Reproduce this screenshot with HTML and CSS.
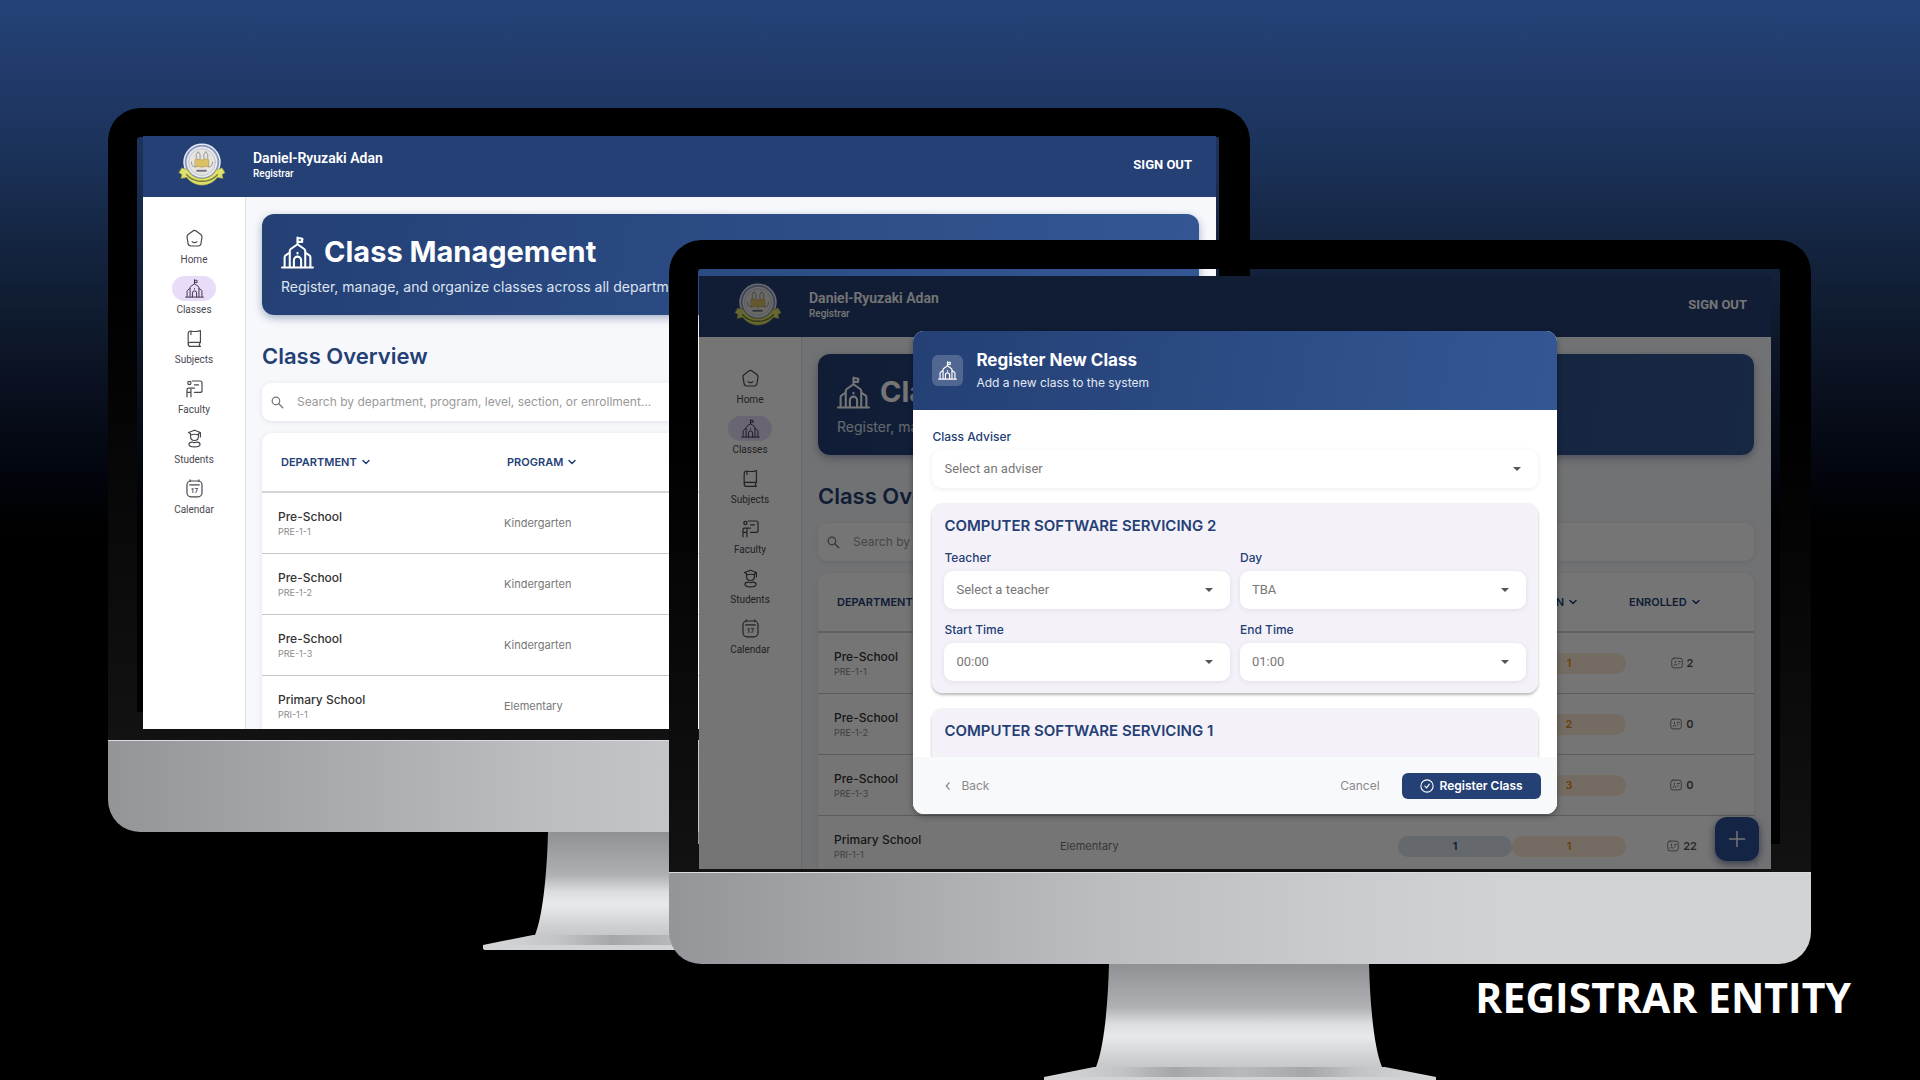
FILE: index.html
```html
<!DOCTYPE html>
<html lang="en">
<head>
<meta charset="utf-8">
<meta name="viewport" content="width=device-width, initial-scale=1">
<title>Registrar Entity</title>
<link rel="stylesheet" href="styles.css">
</head>
<body>
<svg class="sprite" aria-hidden="true">
  <defs>
    <linearGradient id="neck" x1="0" y1="0" x2="0" y2="1">
      <stop offset="0" stop-color="#8f9194"/><stop offset=".4" stop-color="#aeb0b3"/><stop offset=".56" stop-color="#dcdddf"/><stop offset=".68" stop-color="#e8e9ea"/><stop offset=".88" stop-color="#cfd0d2"/><stop offset="1" stop-color="#c3c4c7"/>
    </linearGradient>
    <linearGradient id="foot" x1="0" y1="0" x2="1" y2="0">
      <stop offset="0" stop-color="#d8d9da"/><stop offset=".2" stop-color="#c2c3c6"/><stop offset=".33" stop-color="#a6a7ab"/><stop offset=".5" stop-color="#b9babd"/><stop offset=".67" stop-color="#a6a7ab"/><stop offset=".8" stop-color="#c2c3c6"/><stop offset="1" stop-color="#d8d9da"/>
    </linearGradient>
    <path id="ribbon" d="M5 27l6 2c4 7 9 9 15 9s11-2 15-9l6-2 3 5-3 2 1 4-6-1c-4 5-10 8-16 8s-12-3-16-8l-6 1 1-4-3-2z"/>
  </defs>
  <symbol id="i-school" viewBox="0 0 32 32"><path d="M1 30.500h30M3.500 30V20.500c0-1 .5-1.500 1.300-2L8.500 16M28.500 30V20.500c0-1-.5-1.500-1.300-2L23.500 16M8.500 30V14.500c0-.8.3-1.400 1-1.900L16 8l6.500 4.600c.7.5 1 1.100 1 1.900V30M16 8V1.500M16 2l4 .4c1 .1 1 .8.600 1.400-.5.700-.4 1.200 0 1.900H16M12.500 30v-6.500a3.500 3.500 0 0 1 7 0V30M16 16.200v.8"/></symbol>
  <symbol id="i-home" viewBox="0 0 24 24"><path d="M10 2.500c1.200-.9 2.800-.9 4 0l6 4.500c1.200.9 1.700 2.200 1.400 3.600l-1.300 8c-.3 1.700-1.700 2.900-3.400 2.900H7.300c-1.700 0-3.100-1.200-3.400-2.900l-1.300-8C2.300 9.200 2.800 7.900 4 7zM9 16c1.600 1.400 4.400 1.400 6 0"/></symbol>
  <symbol id="i-book" viewBox="0 0 24 24"><path d="M4 18.500V6c0-2 1.500-3.500 3.500-3.500 3.500 1 8 .8 12-.5v15H6.500M4 18.500C4 20.500 5 22 7 22h12.500M4 18.500C4 17.500 5 17 6.500 17M19 17c-1 1.500-1 3.500 0 5M7.500 2.500V7"/></symbol>
  <symbol id="i-faculty" viewBox="0 0 24 24"><path d="M9 2.500h10c1.700 0 2.500.8 2.500 2.500v9.500c0 1.700-.8 2.500-2.500 2.500h-7M12 7.500h5M2.500 22.500v-9c0-1.200.8-2 2-2H12M7.500 22.500V13M2.500 17h5"/><circle cx="5.500" cy="5" r="2"/></symbol>
  <symbol id="i-student" viewBox="0 0 24 24"><path d="M12 1.500 4.500 4.500 7 6v3.500c0 3.500 2 5 5 5s5-1.500 5-5V6l2.500-1.500zM7 7.500c3-1 7-1 10 0M19.500 5v5M5 19.500c0-2 2-3 4-3 2 1 4 1 6 0 2 0 4 1 4 3S16 22.500 12 22.500s-7-1-7-3z"/></symbol>
  <symbol id="i-search" viewBox="0 0 24 24"><circle cx="9.500" cy="9.500" r="6"/><path d="m14 14 6.500 6.500"/></symbol>
  <symbol id="i-down" viewBox="0 0 12 12"><path d="m3 4.500 3 3 3-3"/></symbol>
  <symbol id="i-card" viewBox="0 0 16 16"><rect x="1" y="1.500" width="14" height="13" rx="3"/><path d="M4 11c0-2 4-2 4 0M6 5.500v2M10 6h2.500M10 9h1"/></symbol>
  <symbol id="i-plus" viewBox="0 0 24 24"><path d="M12 2v20M2 12h20"/></symbol>
  <symbol id="i-back" viewBox="0 0 12 12"><path d="M7.500 2 4 6l3.500 4"/></symbol>
  <symbol id="i-check" viewBox="0 0 16 16"><circle cx="8" cy="8" r="7"/><path d="m5.500 8 2 2.200 3.200-4.400"/></symbol>
  <symbol id="i-seal" viewBox="0 0 52 48">
    <circle cx="26" cy="21" r="19.500" fill="#e9ebf3"/>
    <circle cx="26" cy="21" r="17" fill="none" stroke="#8b98c0" stroke-width="2" stroke-dasharray="1.500 1.200"/>
    <circle cx="26" cy="21" r="14" fill="#e6e4dc" stroke="#a5adc2" stroke-width=".6"/>
    <path d="M19 18.500c3-1 5-1 7 .5 2-1.500 4-1.500 7-.5V26c-3-.8-5-.5-7 .5-2-1-4-1.300-7-.5z" fill="#dcc065" stroke="#a58c45" stroke-width=".6"/>
    <path d="M20 17v-4l2-3 2 3v4M28 17v-4l2-3 2 3v4M15 21c0 3 1 5 4 5M37 21c0 3-1 5-4 5" fill="none" stroke="#7b828c" stroke-width=".8"/>
    <path d="M21 30h10" stroke="#6d748a" stroke-width="2" stroke-dasharray="1.500 1"/>
    <use href="#ribbon" fill="#dfe06c" stroke="#8d9440" stroke-width=".6"/>
    <path d="M10 34c4 5 10 7 16 7s12-2 16-7" fill="none" stroke="#6f7a35" stroke-width="1.500" stroke-dasharray="2 1"/>
  </symbol>
  <symbol id="i-stand" viewBox="0 0 392 119">
    <path d="M65 0h260c1 40 5 84 13 103l-143 4-143-4C60 84 64 40 65 0z" fill="url(#neck)"/>
    <path d="M50 103h291l51 10v3H0v-3z" fill="url(#foot)"/>
    <path d="M0 113h392v3q0 2-3 2H3q-3 0-3-2z" fill="#d2d3d5"/>
  </symbol>
</svg>

<main class="stage">
  <section class="monitor monitor-back">
    <div class="display">
      <div class="screen">
        <header class="topbar">
          <svg class="seal"><use href="#i-seal"/></svg>
          <div class="user"><strong>Daniel-Ryuzaki Adan</strong><span>Registrar</span></div>
          <button class="signout" type="button">SIGN OUT</button>
        </header>
        <div class="layout">
          <nav class="sidebar">
            <a href="#"><span class="nav-icon"><svg><use href="#i-home"/></svg></span>Home</a>
            <a href="#" class="active"><span class="nav-icon"><svg><use href="#i-school"/></svg></span>Classes</a>
            <a href="#"><span class="nav-icon"><svg><use href="#i-book"/></svg></span>Subjects</a>
            <a href="#"><span class="nav-icon"><svg><use href="#i-faculty"/></svg></span>Faculty</a>
            <a href="#"><span class="nav-icon"><svg><use href="#i-student"/></svg></span>Students</a>
            <a href="#"><span class="nav-icon"><svg viewBox="0 0 24 24"><rect x="2.500" y="2.500" width="19" height="20" rx="5"/><path d="M6 7.500h12M6.500 1v2M17.500 1v2"/><text x="12" y="17.500" text-anchor="middle">17</text></svg></span>Calendar</a>
          </nav>
          <div class="content">
            <div class="banner">
              <h1><svg><use href="#i-school"/></svg>Class Management</h1>
              <p>Register, manage, and organize classes across all departments</p>
            </div>
            <h2>Class Overview</h2>
            <div class="search"><svg><use href="#i-search"/></svg><input type="text" aria-label="Search classes" placeholder="Search by department, program, level, section, or enrollment..."></div>
            <table class="classes">
              <colgroup><col class="c-dept"><col class="c-prog"><col class="c-num"><col class="c-num"><col class="c-enr"></colgroup>
              <thead><tr>
                <th><button type="button">DEPARTMENT<svg><use href="#i-down"/></svg></button></th>
                <th><button type="button">PROGRAM<svg><use href="#i-down"/></svg></button></th>
                <th><button type="button">LEVEL<svg><use href="#i-down"/></svg></button></th>
                <th><button type="button">SECTION<svg><use href="#i-down"/></svg></button></th>
                <th><button type="button">ENROLLED<svg><use href="#i-down"/></svg></button></th>
              </tr></thead>
              <tbody>
                <tr><td><b>Pre-School</b><small>PRE-1-1</small></td><td>Kindergarten</td><td><span class="pill level">1</span></td><td><span class="pill section">1</span></td><td><span class="count"><svg><use href="#i-card"/></svg>2</span></td></tr>
                <tr><td><b>Pre-School</b><small>PRE-1-2</small></td><td>Kindergarten</td><td><span class="pill level">1</span></td><td><span class="pill section">2</span></td><td><span class="count"><svg><use href="#i-card"/></svg>0</span></td></tr>
                <tr><td><b>Pre-School</b><small>PRE-1-3</small></td><td>Kindergarten</td><td><span class="pill level">1</span></td><td><span class="pill section">3</span></td><td><span class="count"><svg><use href="#i-card"/></svg>0</span></td></tr>
                <tr><td><b>Primary School</b><small>PRI-1-1</small></td><td>Elementary</td><td><span class="pill level">1</span></td><td><span class="pill section">1</span></td><td><span class="count"><svg><use href="#i-card"/></svg>22</span></td></tr>
              </tbody>
            </table>
          </div>
        </div>
      </div>
    </div>
    <div class="chin"></div>
    <svg class="stand"><use href="#i-stand"/></svg>
  </section>

  <section class="monitor monitor-front">
    <div class="display">
      <div class="screen">
        <header class="topbar">
          <svg class="seal"><use href="#i-seal"/></svg>
          <div class="user"><strong>Daniel-Ryuzaki Adan</strong><span>Registrar</span></div>
          <button class="signout" type="button">SIGN OUT</button>
        </header>
        <div class="layout">
          <nav class="sidebar">
            <a href="#"><span class="nav-icon"><svg><use href="#i-home"/></svg></span>Home</a>
            <a href="#" class="active"><span class="nav-icon"><svg><use href="#i-school"/></svg></span>Classes</a>
            <a href="#"><span class="nav-icon"><svg><use href="#i-book"/></svg></span>Subjects</a>
            <a href="#"><span class="nav-icon"><svg><use href="#i-faculty"/></svg></span>Faculty</a>
            <a href="#"><span class="nav-icon"><svg><use href="#i-student"/></svg></span>Students</a>
            <a href="#"><span class="nav-icon"><svg viewBox="0 0 24 24"><rect x="2.500" y="2.500" width="19" height="20" rx="5"/><path d="M6 7.500h12M6.500 1v2M17.500 1v2"/><text x="12" y="17.500" text-anchor="middle">17</text></svg></span>Calendar</a>
          </nav>
          <div class="content">
            <div class="banner">
              <h1><svg><use href="#i-school"/></svg>Class Management</h1>
              <p>Register, manage, and organize classes across all departments</p>
            </div>
            <h2>Class Overview</h2>
            <div class="search"><svg><use href="#i-search"/></svg><input type="text" aria-label="Search classes" placeholder="Search by department, program, level, section, or enrollment..."></div>
            <table class="classes">
              <colgroup><col class="c-dept"><col class="c-prog"><col class="c-num"><col class="c-num"><col class="c-enr"></colgroup>
              <thead><tr>
                <th><button type="button">DEPARTMENT<svg><use href="#i-down"/></svg></button></th>
                <th><button type="button">PROGRAM<svg><use href="#i-down"/></svg></button></th>
                <th><button type="button">LEVEL<svg><use href="#i-down"/></svg></button></th>
                <th><button type="button">SECTION<svg><use href="#i-down"/></svg></button></th>
                <th><button type="button">ENROLLED<svg><use href="#i-down"/></svg></button></th>
              </tr></thead>
              <tbody>
                <tr><td><b>Pre-School</b><small>PRE-1-1</small></td><td>Kindergarten</td><td><span class="pill level">1</span></td><td><span class="pill section">1</span></td><td><span class="count"><svg><use href="#i-card"/></svg>2</span></td></tr>
                <tr><td><b>Pre-School</b><small>PRE-1-2</small></td><td>Kindergarten</td><td><span class="pill level">1</span></td><td><span class="pill section">2</span></td><td><span class="count"><svg><use href="#i-card"/></svg>0</span></td></tr>
                <tr><td><b>Pre-School</b><small>PRE-1-3</small></td><td>Kindergarten</td><td><span class="pill level">1</span></td><td><span class="pill section">3</span></td><td><span class="count"><svg><use href="#i-card"/></svg>0</span></td></tr>
                <tr><td><b>Primary School</b><small>PRI-1-1</small></td><td>Elementary</td><td><span class="pill level">1</span></td><td><span class="pill section">1</span></td><td><span class="count"><svg><use href="#i-card"/></svg>22</span></td></tr>
              </tbody>
            </table>
          </div>
        </div>
        <button class="fab" type="button" aria-label="Add class"><svg><use href="#i-plus"/></svg></button>
        <div class="scrim">
          <form class="modal" role="dialog" aria-labelledby="modal-title">
            <header class="modal-head">
              <span class="modal-icon"><svg><use href="#i-school"/></svg></span>
              <div><h2 id="modal-title">Register New Class</h2><p>Add a new class to the system</p></div>
            </header>
            <div class="modal-body">
              <div class="field">
                <label for="adviser">Class Adviser</label>
                <div class="select"><select id="adviser"><option>Select an adviser</option></select></div>
              </div>
              <fieldset class="subject">
                <h3>COMPUTER SOFTWARE SERVICING 2</h3>
                <div class="fields">
                  <div class="field"><label for="teacher">Teacher</label><div class="select"><select id="teacher"><option>Select a teacher</option></select></div></div>
                  <div class="field"><label for="day">Day</label><div class="select"><select id="day"><option>TBA</option></select></div></div>
                  <div class="field"><label for="start">Start Time</label><div class="select"><select id="start"><option>00:00</option></select></div></div>
                  <div class="field"><label for="end">End Time</label><div class="select"><select id="end"><option>01:00</option></select></div></div>
                </div>
              </fieldset>
              <fieldset class="subject">
                <h3>COMPUTER SOFTWARE SERVICING 1</h3>
              </fieldset>
            </div>
            <footer class="modal-foot">
              <button class="plain back" type="button"><svg><use href="#i-back"/></svg>Back</button>
              <button class="plain" type="button">Cancel</button>
              <button class="primary" type="submit"><svg><use href="#i-check"/></svg>Register Class</button>
            </footer>
          </form>
        </div>
      </div>
    </div>
    <div class="chin"></div>
    <svg class="stand"><use href="#i-stand"/></svg>
  </section>
  <p class="caption">REGISTRAR ENTITY</p>
</main>
</body>
</html>
```

FILE: styles.css
```css
* { box-sizing: border-box; margin: 0; padding: 0; }

:root {
  --navy: #244075;
  --blue: #345794;
  --ui: Inter, "Noto Sans", sans-serif;
  --system: Roboto, "Noto Sans", sans-serif;
}

body { background: #000; font-family: var(--ui); color: #333; }
button, input, select { font: inherit; color: inherit; border: 0; background: none; }
svg { display: block; fill: none; stroke: currentColor; stroke-width: 2; stroke-linecap: round; stroke-linejoin: round; }
.sprite { position: absolute; width: 0; height: 0; }

/* Backdrop and the two overlapping monitors */
.stage {
  display: grid;
  grid-template-columns: 108fr 561fr 581fr 561fr 109fr;
  align-items: start;
  height: 100vh;
  padding-top: 108px;
  overflow: hidden;
  background: linear-gradient(#254379, #1b325a 14%, #14243f 23%, #0e1a2d 30%, #0a101f 36%, #02050d 44%, #000 49%);
}
.monitor { display: flex; flex-direction: column; grid-row: 1; min-width: 0; }
.monitor-back { grid-column: 2 / 4; }
.monitor-front { grid-column: 3 / 5; margin-top: 132px; }

.display { display: grid; height: 632px; }
.display::before {
  content: "";
  grid-area: 1 / 1;
  padding: 29px 31px 28px 29px;
  border-radius: 32px 32px 0 0;
  background: linear-gradient(#000 30%, #121212);
  mask: linear-gradient(#000 0 0) content-box exclude, linear-gradient(#000 0 0);
}
.screen {
  grid-area: 1 / 1;
  position: relative;
  display: flex;
  flex-direction: column;
  min-width: 0;
  overflow: hidden;
  background: #f7f8fb;
}
.monitor-back .screen { margin: 28px 34px 11px 35px; }
.monitor-front .screen { margin: 36px 40px 3px 30px; }

.chin {
  height: 92px;
  border-top: 1px solid #dcddde;
  border-radius: 0 0 32px 32px;
  background: linear-gradient(90deg, #939598, #a3a5a8 15%, #bcbdc1 38%, #cbccd0 60%, #d1d3d4 75%);
}
.stand { align-self: center; width: 392px; height: 119px; stroke: none; }

.caption {
  grid-column: 1 / -1;
  grid-row: 1;
  justify-self: end;
  margin-top: 861px;
  margin-right: 69px;
  font: 700 41px/56px "Open Sans", sans-serif;
  color: #fff;
}

/* Application shell */
.topbar {
  display: flex;
  align-items: center;
  flex: none;
  height: 61px;
  padding: 0 24px 0 34px;
  background: var(--navy);
  color: #fff;
  font-family: var(--system);
}
.seal { width: 50px; height: 46px; margin: -4px 26px 0 0; stroke: none; }
.user { display: flex; flex-direction: column; margin-top: -4px; }
.user strong { font-size: 14px; line-height: 17px; font-weight: 600; }
.user span { font-size: 10px; line-height: 13px; font-weight: 500; }
.signout { margin-left: auto; margin-top: -5px; font-size: 13px; font-weight: 700; }

.layout { display: flex; flex: 1; min-height: 0; }
.sidebar {
  display: flex;
  flex-direction: column;
  align-items: center;
  gap: 8px;
  flex: none;
  width: 103px;
  padding-top: 29px;
  border-right: 1px solid #dfe1e6;
  background: #fff;
}
.sidebar a {
  display: flex;
  flex-direction: column;
  align-items: center;
  gap: 3px;
  height: 42px;
  font: 400 10px/12px var(--system);
  color: #4a4650;
  text-decoration: none;
}
.nav-icon { display: grid; place-items: center; width: 44px; height: 25px; border-radius: 13px; }
.nav-icon svg { width: 19px; height: 19px; stroke-width: 1.5; }
.nav-icon text { fill: currentColor; stroke: none; font: 700 8px var(--system); }
.active .nav-icon { background: #e8dcf8; color: #302844; }

.content { flex: 1; min-width: 0; padding: 17px 17px 0 16px; }
.banner {
  height: 101px;
  padding: 20px 19px;
  border-radius: 12px;
  background: linear-gradient(100deg, var(--navy), var(--blue));
  box-shadow: 0 3px 8px rgb(36 64 117 / 40%);
  color: #fff;
}
.banner h1 { display: flex; align-items: center; gap: 10px; font-size: 29px; line-height: 36px; font-weight: 700; }
.banner h1 svg { width: 33px; height: 33px; }
.banner p { margin-top: 7px; font-size: 14px; line-height: 20px; color: #dde4f0; }
.content > h2 { margin: 27px 0 13px; font-size: 22px; line-height: 28px; font-weight: 600; color: var(--navy); }

.search {
  display: flex;
  align-items: center;
  gap: 12px;
  height: 38px;
  padding: 0 8px;
  border-radius: 9px;
  background: #fff;
  box-shadow: 0 1px 5px rgb(36 64 117 / 12%);
}
.search svg { width: 15px; height: 15px; color: #777; }
.search input { flex: 1; font-size: 12px; line-height: 18px; }
.search input::placeholder { color: #999; opacity: 1; }

.classes {
  width: 100%;
  margin-top: 12px;
  table-layout: fixed;
  border-collapse: separate;
  border-spacing: 0;
  border-radius: 10px;
  background: #fff;
  box-shadow: 0 1px 5px rgb(36 64 117 / 12%);
}
.c-dept { width: 242px; }
.c-num { width: 114px; }
.c-enr { width: 128px; }
.classes th { height: 60px; border-bottom: 2px solid #d4d4d6; text-align: left; }
.classes th button { display: flex; align-items: center; gap: 3px; padding-left: 3px; font-size: 11px; font-weight: 600; color: var(--navy); }
.classes th svg { width: 12px; height: 12px; stroke-width: 1.5; }
.classes th:first-child button { padding-left: 19px; }
.classes td { height: 61px; border-bottom: 1px solid #c8c8ca; font-size: 11px; line-height: 14px; color: #777; }
.classes td:first-child { padding-left: 16px; }
.classes td b { display: block; font-size: 12px; line-height: 16px; font-weight: 500; color: #333; }
.classes td small { display: block; font-size: 9px; line-height: 13px; color: #8a8a8a; }
.classes td:last-child { padding-right: 16px; }
.pill { display: block; border-radius: 10px; line-height: 21px; text-align: center; font-weight: 600; }
.classes .level { background: #dde3ee; color: var(--navy); }
.classes .section { background: #fdebd6; color: #e8861c; }
.count { display: flex; justify-content: center; align-items: center; gap: 4px; font-size: 11px; font-weight: 600; color: #555; }
.count svg { width: 12px; height: 12px; stroke-width: 1; }

.fab {
  position: absolute;
  right: 12px;
  bottom: 8px;
  display: grid;
  place-items: center;
  width: 44px;
  height: 44px;
  border-radius: 12px;
  background: #2b4f96;
  box-shadow: 0 3px 8px rgb(20 40 90 / 60%);
  color: #fff;
}
.fab svg { width: 18px; height: 18px; }

/* Registration dialog */
.scrim { position: absolute; inset: 0; display: grid; place-items: center; background: rgb(0 0 0 / 54%); }
.modal {
  display: flex;
  flex-direction: column;
  width: 60%;
  height: 483px;
  border-radius: 11px;
  overflow: hidden;
  background: #fff;
  box-shadow: 0 2px 6px rgb(0 0 0 / 35%);
}
.modal-head {
  display: flex;
  align-items: center;
  gap: 13px;
  flex: none;
  height: 79px;
  padding: 0 19px;
  background: linear-gradient(100deg, var(--navy), var(--blue));
  color: #fff;
}
.modal-icon { display: grid; place-items: center; width: 31px; height: 31px; border-radius: 6px; background: rgb(255 255 255 / 20%); }
.modal-icon svg { width: 19px; height: 19px; }
.modal-head h2 { font-size: 17px; line-height: 20px; font-weight: 700; }
.modal-head p { margin-top: 5px; font-size: 12px; line-height: 16px; color: #e3e9f4; }

.modal-body { flex: 1; min-height: 0; overflow: hidden; padding: 18px 19px 0; }
.field { display: flex; flex-direction: column; gap: 5px; }
.field label { font-size: 12px; line-height: 17px; font-weight: 500; color: var(--navy); }
.select { position: relative; }
.select::after {
  content: "";
  position: absolute;
  right: 17px;
  top: 17px;
  border: 4px solid transparent;
  border-top-color: #555;
  border-bottom: 0;
  pointer-events: none;
}
.select select {
  width: 100%;
  height: 38px;
  padding: 0 12px;
  border-radius: 9px;
  appearance: none;
  background: #fff;
  box-shadow: 0 1px 5px rgb(36 64 117 / 10%);
  font: 400 13px/16px var(--system);
  color: #777;
}
.subject {
  margin-top: 15px;
  padding: 13px 12px 12px;
  border: 0;
  border-radius: 11px;
  background: #f5f1f9;
  box-shadow: 0 2px 3px rgb(0 0 0 / 28%);
}
.subject h3 { font-size: 15px; line-height: 20px; font-weight: 600; color: var(--navy); }
.fields { display: grid; grid-template-columns: 1fr 1fr; gap: 12px 10px; margin-top: 13px; }
.subject + .subject { min-height: 190px; }

.modal-foot {
  display: flex;
  align-items: center;
  gap: 22px;
  flex: none;
  height: 57px;
  padding: 0 16px 0 30px;
  background: #f8f9fb;
}
.plain { display: flex; align-items: center; gap: 8px; font-size: 12px; color: #8a8a8a; }
.plain svg { width: 10px; height: 12px; stroke-width: 1.5; }
.back { margin-right: auto; }
.primary {
  display: flex;
  align-items: center;
  justify-content: center;
  gap: 6px;
  width: 139px;
  height: 26px;
  border-radius: 6px;
  background: var(--navy);
  color: #fff;
  font-size: 12px;
  font-weight: 600;
}
.primary svg { width: 14px; height: 14px; stroke-width: 1.25; }
```
